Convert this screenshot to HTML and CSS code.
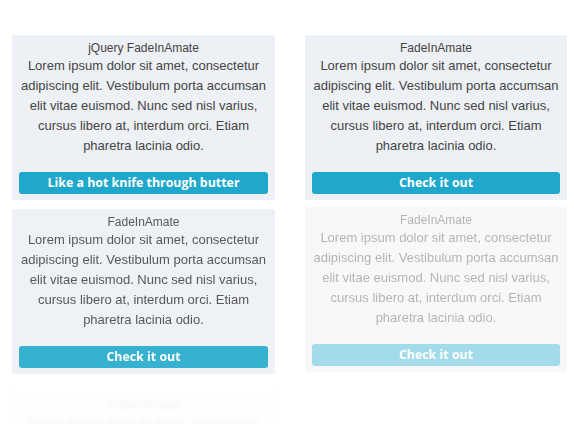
FILE: index.html
```html
<!DOCTYPE html>
<html>
<head>
<meta charset="utf-8">
<link rel="stylesheet" href="styles.css">
</head>
<body>
<div class="grid">
  <div class="card">
    <div class="title">jQuery FadeInAmate</div>
    <p class="text">Lorem ipsum dolor sit amet, consectetur adipiscing elit. Vestibulum porta accumsan elit vitae euismod. Nunc sed nisl varius, cursus libero at, interdum orci. Etiam pharetra lacinia odio.</p>
    <a class="btn">Like a hot knife through butter</a>
  </div>
  <div class="card">
    <div class="title">FadeInAmate</div>
    <p class="text">Lorem ipsum dolor sit amet, consectetur adipiscing elit. Vestibulum porta accumsan elit vitae euismod. Nunc sed nisl varius, cursus libero at, interdum orci. Etiam pharetra lacinia odio.</p>
    <a class="btn">Check it out</a>
  </div>
  <div class="card fade-90">
    <div class="title">FadeInAmate</div>
    <p class="text">Lorem ipsum dolor sit amet, consectetur adipiscing elit. Vestibulum porta accumsan elit vitae euismod. Nunc sed nisl varius, cursus libero at, interdum orci. Etiam pharetra lacinia odio.</p>
    <a class="btn">Check it out</a>
  </div>
  <div class="card fade-40">
    <div class="title">FadeInAmate</div>
    <p class="text">Lorem ipsum dolor sit amet, consectetur adipiscing elit. Vestibulum porta accumsan elit vitae euismod. Nunc sed nisl varius, cursus libero at, interdum orci. Etiam pharetra lacinia odio.</p>
    <a class="btn">Check it out</a>
  </div>
  <div class="card fade-05">
    <div class="title">FadeInAmate</div>
    <p class="text">Lorem ipsum dolor sit amet, consectetur</p>
  </div>
</div>
</body>
</html>
```
FILE: styles.css
```css
html, body {
  margin: 0;
  padding: 0;
  background: #ffffff;
  overflow: hidden;
}
body {
  font-family: "Liberation Sans", Arial, sans-serif;
  font-size: 12px;
  color: #444444;
}
.grid {
  display: grid;
  grid-template-columns: 263px 262px;
  column-gap: 30px;
  row-gap: 9px;
  padding: 35px 0 0 12px;
  align-items: start;
}
.card {
  background: #edf0f5;
  border-radius: 2px;
  padding: 6px 7px 6px;
  text-align: center;
  display: flex;
  flex-direction: column;
}
.title {
  line-height: 15px;
}
.text {
  margin: 0 0 16px;
  font-size: 13px;
  line-height: 20px;
}
.btn {
  display: block;
  height: 22px;
  line-height: 22px;
  background: #1fa8cb;
  color: #ffffff;
  border-radius: 3px;
  font-family: "Open Sans", sans-serif;
  font-weight: 700;
  font-size: 12.4px;
}
.fade-90 {
  opacity: 0.89;
}
.fade-40 {
  opacity: 0.4;
  transform: translateY(-2px);
}
.fade-05 {
  opacity: 0.05;
  transform: translateY(9px);
  filter: blur(1px);
  padding-bottom: 0;
}
.fade-05 .text {
  margin: 0;
}
```
